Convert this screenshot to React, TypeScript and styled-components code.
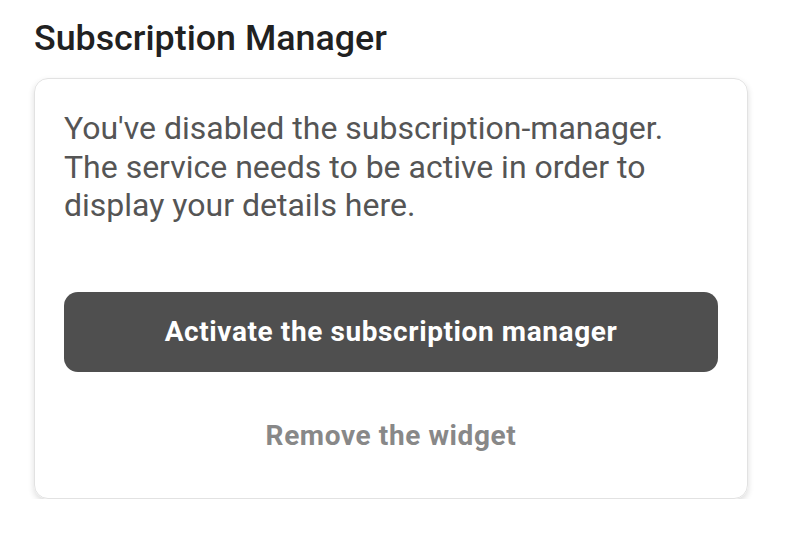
import styled, { createGlobalStyle } from 'styled-components'

const GlobalStyle = createGlobalStyle`
  html, body {
    margin: 0;
    padding: 0;
    background: #ffffff;
    font-family: Roboto, "Liberation Sans", sans-serif;
  }
`

const Page = styled.div`
  padding: 16px 38px 0 34px;
  width: 786px;
  box-sizing: border-box;
`

const Title = styled.h2`
  margin: 0 0 18px;
  font-size: 35.8px;
  line-height: 44px;
  font-weight: 500;
  color: #212121;
`

const Card = styled.div`
  border: 1px solid #e2e2e2;
  border-radius: 14px;
  box-shadow: 0 3px 6px rgba(0, 0, 0, 0.14);
  padding: 30px 29px 22px 29px;
  display: flex;
  flex-direction: column;
`

const Message = styled.p`
  margin: 0 0 67px;
  font-size: 32px;
  line-height: 38.5px;
  color: #555555;
`

const PrimaryButton = styled.button`
  height: 80px;
  border: none;
  border-radius: 14px;
  background: #4f4f4f;
  color: #ffffff;
  font-family: inherit;
  font-size: 28px;
  font-weight: 700;
  letter-spacing: 0.6px;
  cursor: pointer;
`

const LinkButton = styled.button`
  margin-top: 24px;
  height: 80px;
  border: none;
  background: transparent;
  color: #888888;
  font-family: inherit;
  font-size: 28px;
  font-weight: 700;
  letter-spacing: 0.6px;
  cursor: pointer;
`

export default function App() {
  return (
    <>
      <GlobalStyle />
      <Page>
        <Title>Subscription Manager</Title>
        <Card>
          <Message>
            You've disabled the subscription-manager.
            <br />
            The service needs to be active in order to
            <br />
            display your details here.
          </Message>
          <PrimaryButton>Activate the subscription manager</PrimaryButton>
          <LinkButton>Remove the widget</LinkButton>
        </Card>
      </Page>
    </>
  )
}
